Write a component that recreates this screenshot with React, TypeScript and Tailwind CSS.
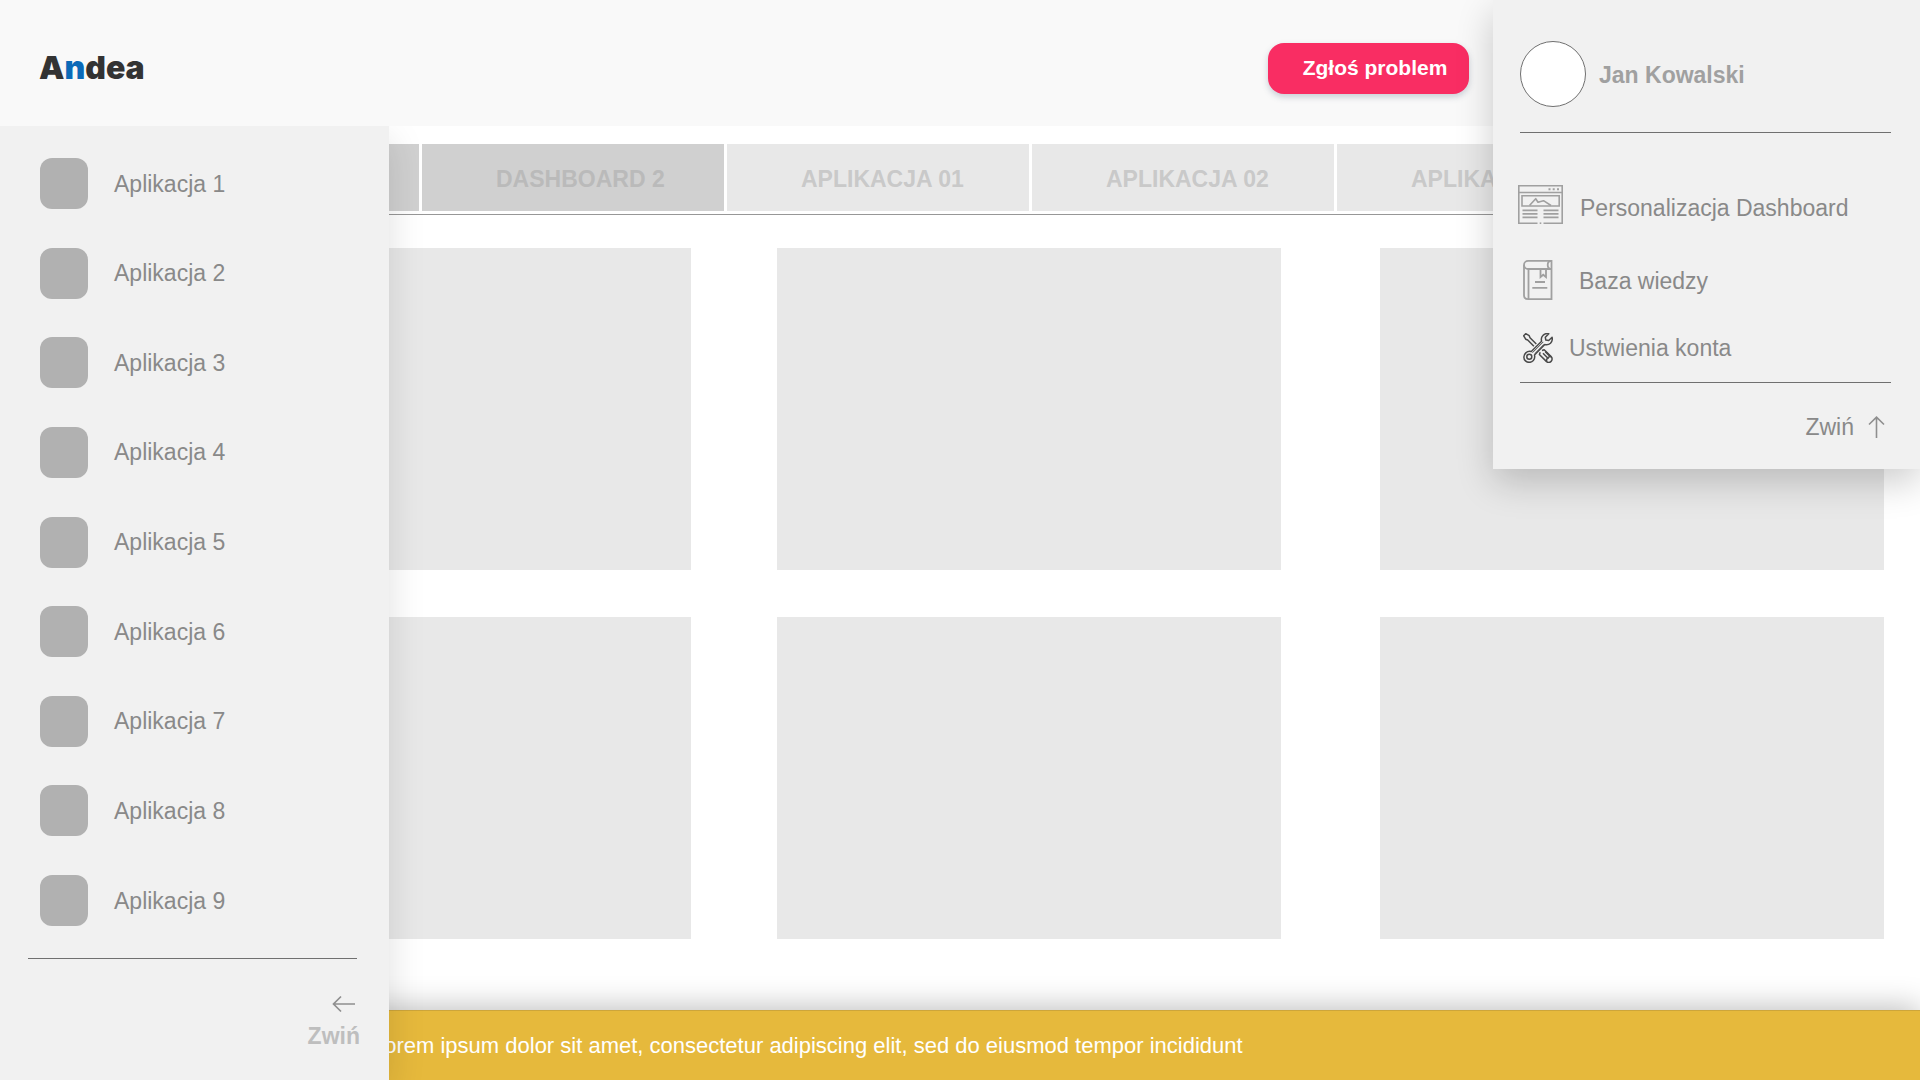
const apps = [1, 2, 3, 4, 5, 6, 7, 8, 9];

const tabs = [
  { id: 'd1', name: '', dashboard: true },
  { id: 'd2', name: 'DASHBOARD 2', dashboard: true },
  { id: 'a1', name: 'APLIKACJA 01', dashboard: false },
  { id: 'a2', name: 'APLIKACJA 02', dashboard: false },
  { id: 'a3', name: 'APLIKACJA 03', dashboard: false },
];

function LayoutIcon() {
  return (
    <svg width="45" height="39" viewBox="0 0 45 39" fill="none" stroke="#a0a0a0" strokeWidth="1.6" aria-hidden="true">
      <path d="M19.5 38.2H.8V.8h43.4v37.4H25.5" />
      <path d="M.8 7.5h43.4M4 10.800h37.200v10.200H4z" />
      <path d="M30.500 4.200h2M34.700 4.200h2M39 4.200h2" strokeWidth="2" />
      <path d="M11.500 20.500l6.200-6.800 2.300 3.500 5.500-1.500 7.500 4.800" strokeLinejoin="round" />
      <path d="M4.500 25.400h15M4.500 28.900h15M4.500 32.400h15M25.500 25.400h15M25.500 28.900h15M25.500 32.400h15" />
      <path d="M21.700 38.200h1.600" />
    </svg>
  );
}

function BookIcon() {
  return (
    <svg width="30" height="40" viewBox="0 0 30 40" fill="none" stroke="#a0a0a0" strokeWidth="1.8" aria-hidden="true">
      <path d="M28.5 9H5.200C2.800 9 1 7.300 1 5s1.800-4.100 4.200-4.100h23.300" />
      <path d="M28.500.9C26 .9 24.700 2.500 24.700 5S26 9 28.500 9" />
      <path d="M28.500 0v39.100H5.200C2.800 39.100 1 37.600 1 35.300V5" />
      <path d="M5.500 9v30.200" />
      <path d="M17.500 9v8l2.700-2.300L23 17V9" />
      <path d="M12 22h10M9.300 27.800h15" />
    </svg>
  );
}

function ToolsIcon() {
  return (
    <svg width="30" height="30" viewBox="0 0 30 30" fill="none" stroke="#4a4a4a" strokeWidth="1.500" strokeLinejoin="round" aria-hidden="true">
      <path d="M10.900 13.300L4.700 7 2.700 6.200.7 2.800 2.700.7 6.200 2.700 7 4.700l6.300 6.300" />
      <path d="M17.200 19.300l-.8 2.200 6.900 6.900c1.400 1.400 3.500 1.300 4.800 0s1.400-3.400 0-4.800l-6.900-6.900-2.200.8" />
      <path d="M20 20.200l5.500 5.500M22.300 18.600l5 5" />
      <path d="M23.500 28.200c0-2.800 1.500-4.500 4.700-4.700" />
      <path d="M25.800.8c-2.200-.5-4.500.1-5.900 1.700-1.500 1.600-1.900 3.700-1.300 5.700L8.300 18.500c-1.900-.5-4 0-5.500 1.400-2.500 2.300-2.500 5.900-.3 8 2.200 2.100 5.700 1.900 7.800-.4 1.300-1.500 1.700-3.600 1.200-5.400L21.800 11.500c2 .5 4.100.2 5.700-1.300 1.500-1.500 2.100-3.700 1.600-5.900L25.700 7.500 22.800 7l-.5-2.700z" />
      <path d="M9.500 19.700L20.300 8.900M12 20.500L21 11.300" strokeWidth="1" />
      <circle cx="6.300" cy="23.700" r="2.500" />
    </svg>
  );
}

export default function App() {
  return (
    <div className="relative flex min-h-screen flex-col overflow-hidden bg-white font-['Liberation_Sans',Arial,sans-serif] text-[23px] leading-7 text-[#898989]">
      <header className="z-20 flex h-[126px] items-center justify-between bg-[#f9f9f9] pr-[451px] pl-[39px]">
        <a href="#" className="mt-[10px] font-['Inter',sans-serif] text-[32px] leading-8 font-black text-[#333333]">
          A<span className="text-[#0a6ab8]">n</span>dea
        </a>
        <button className="mt-[10px] h-[51px] w-[201px] rounded-2xl bg-[#f92d63] pl-[13px] text-[21px] font-bold text-white shadow-[0_3px_6px_rgba(60,80,110,0.25)]">
          Zgłoś problem
        </button>
      </header>

      <main className="flex-1">
        <nav className="mt-[18px] mr-9 ml-[117px] flex gap-[3px] border-b border-[#979797] pb-[3px]">
          {tabs.map((tab) => (
            <button
              key={tab.id}
              className={
                tab.dashboard
                  ? 'h-[67px] w-[302px] shrink-0 bg-[#d0d0d0] pt-[2px] pl-[74px] text-left font-bold text-[#bababa]'
                  : 'h-[67px] w-[302px] shrink-0 bg-[#e8e8e8] pt-[2px] pl-[74px] text-left font-bold text-[#c9c9c9]'
              }
            >
              {tab.name}
            </button>
          ))}
        </nav>
        <div className="mt-[33px] mr-9 ml-[187px] flex flex-col gap-[47px]">
          {[0, 1].map((row) => (
            <div key={row} className="flex h-[322px]">
              <section className="flex-1 bg-[#e8e8e8]" />
              <section className="mr-[99px] ml-[86px] flex-1 bg-[#e8e8e8]" />
              <section className="flex-1 bg-[#e8e8e8]" />
            </div>
          ))}
        </div>
      </main>

      <footer className="flex h-[70px] items-center border-t border-[#cda53a] bg-[#e6b93c] pl-[372px] text-[22px] text-white shadow-[0_-3px_30px_rgba(0,0,0,0.26)]">
        Lorem ipsum dolor sit amet, consectetur adipiscing elit, sed do eiusmod tempor incididunt
      </footer>

      <aside className="absolute top-[126px] bottom-0 left-0 z-10 w-[389px] bg-[#f1f1f1] pt-8 shadow-[0_13px_35px_rgba(0,0,0,0.13)]">
        <ul className="ml-10 flex h-[768px] flex-col justify-between">
          {apps.map((n) => (
            <li key={n}>
              <a href="#" className="flex items-center gap-[26px]">
                <span className="h-[51px] w-12 rounded-xl bg-[#b1b1b1]" />
                Aplikacja {n}
              </a>
            </li>
          ))}
        </ul>
        <hr className="mt-8 mr-8 ml-7 border-[#707070]" />
        <button className="mt-9 mr-[29px] ml-auto flex flex-col items-end font-bold text-[#bebebe]">
          <svg width="23" height="18" viewBox="0 0 23 18" fill="none" stroke="#8f8f8f" strokeWidth="1.700" className="mr-[5px]" aria-hidden="true">
            <path d="M23 9H1.500M9 1.500L1.500 9 9 16.500" />
          </svg>
          <span className="mt-[9px]">Zwiń</span>
        </button>
      </aside>

      <aside className="absolute top-0 right-0 z-30 w-[427px] bg-[#f1f1f1] pt-[41px] pr-[29px] pb-7 pl-[27px] shadow-[0_13px_35px_rgba(0,0,0,0.2)]">
        <div className="flex items-center gap-[13px]">
          <span className="size-[66px] rounded-full border border-[#707070] bg-white" />
          <span className="mt-[2px] font-bold text-[#a0a0a0]">Jan Kowalski</span>
        </div>
        <hr className="mt-[25px] border-[#707070]" />
        <ul className="mt-[52px] flex flex-col">
          <li>
            <a href="#" className="-ml-[2px] flex h-[39px] items-center gap-[17px]">
              <LayoutIcon />
              <span className="mt-[6px]">Personalizacja Dashboard</span>
            </a>
          </li>
          <li className="mt-9">
            <a href="#" className="ml-[3px] flex h-10 items-center gap-[26px]">
              <BookIcon />
              <span className="mt-[2px]">Baza wiedzy</span>
            </a>
          </li>
          <li className="mt-[33px]">
            <a href="#" className="ml-[3px] flex h-[30px] items-center gap-4">
              <ToolsIcon />
              Ustwienia konta
            </a>
          </li>
        </ul>
        <hr className="mt-[19px] border-[#707070]" />
        <button className="mt-[30px] mr-[6px] ml-auto flex items-center gap-[14px]">
          Zwiń
          <svg width="17" height="22" viewBox="0 0 17 22" fill="none" stroke="#8f8f8f" strokeWidth="1.600" aria-hidden="true">
            <path d="M8.500 22V1.200M1 8.500l7.500-7.300L16 8.500" />
          </svg>
        </button>
      </aside>
    </div>
  );
}
